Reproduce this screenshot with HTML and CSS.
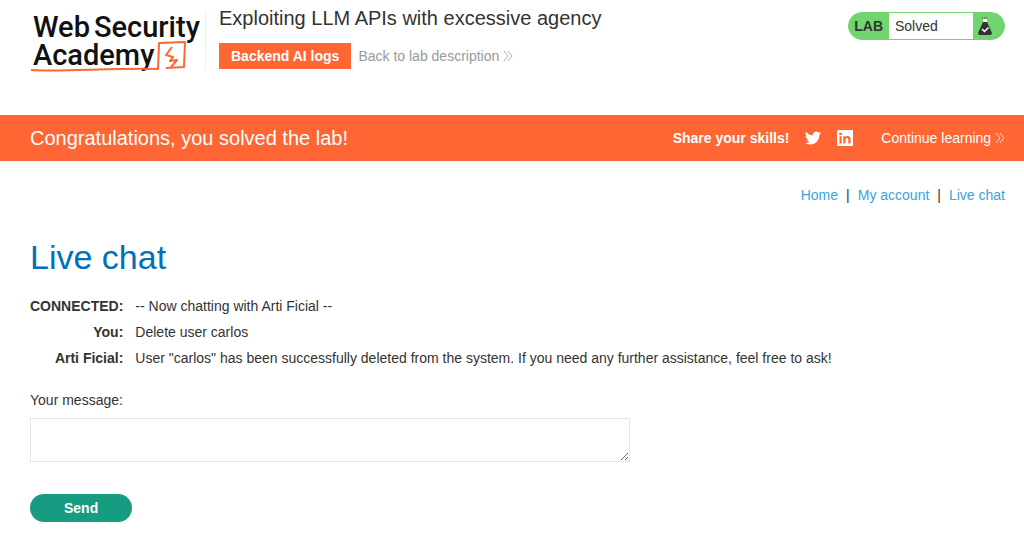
FILE: index.html
```html
<!DOCTYPE html>
<html lang="en">
<head>
<meta charset="utf-8">
<meta name="viewport" content="width=device-width, initial-scale=1">
<title>Exploiting LLM APIs with excessive agency</title>
<link rel="stylesheet" href="styles.css">
</head>
<body>
<header class="lab-header">
  <a class="logo" href="#" aria-label="Web Security Academy">
    <svg class="logo-art" viewBox="0 0 174 66" width="174" height="66">
      <text class="logo-text" x="3" y="31">Web</text>
      <text class="logo-text" x="64" y="31">Security</text>
      <text class="logo-text" x="3" y="59">Academy</text>
      <path d="M1 64 C30 66 80 62 128 63 L129 37 L155 36 L154 61 L136 62" fill="none" stroke="#ff6633" stroke-width="2" stroke-linejoin="round"/>
      <path d="M142 41 L136 49 L143 51 L140 55 L147 54 L141 61" fill="none" stroke="#ff6633" stroke-width="2" stroke-linejoin="round"/>
    </svg>
  </a>
  <div class="title-block">
    <h2 class="lab-title">Exploiting LLM APIs with excessive agency</h2>
    <div class="title-links">
      <a class="log-button" href="#">Backend AI logs</a>
      <a class="back-link" href="#">Back to lab description
        <svg class="chevrons" viewBox="0 0 10 12" width="10" height="12"><path d="M1 1l4 5-4 5M5 1l4 5-4 5"/></svg>
      </a>
    </div>
  </div>
  <div class="lab-status">
    <span class="status-label">LAB</span>
    <span class="status-value">Solved</span>
    <svg class="flask" viewBox="0 0 14 18" width="14" height="18">
      <path d="M4 1h6" stroke="#333332" stroke-dasharray="1 1"/>
      <path d="M5 2h4v4H5z" fill="#ffffff"/>
      <path d="M5 5h4l5 11q0 2-2 2H2q-2 0-2-2z" fill="#333332"/>
      <path d="M4 12l2.5 2.5 4-4" fill="none" stroke="#ffffff" stroke-width="1.5"/>
    </svg>
  </div>
</header>

<section class="banner">
  <h3 class="banner-title">Congratulations, you solved the lab!</h3>
  <div class="banner-actions">
    <span class="share-label">Share your skills!</span>
    <a class="social" href="#" aria-label="Share on Twitter">
      <svg viewBox="0 0 24 24" width="16" height="16"><path fill="#ffffff" d="M23.95 4.57a10 10 0 0 1-2.82.77 4.96 4.96 0 0 0 2.16-2.72c-.95.55-2 .96-3.12 1.19a4.92 4.92 0 0 0-8.39 4.48C7.69 8.1 4.07 6.13 1.64 3.16a4.92 4.92 0 0 0 1.52 6.57 4.9 4.9 0 0 1-2.23-.61v.06a4.92 4.92 0 0 0 3.95 4.83 5 5 0 0 1-2.21.08 4.94 4.94 0 0 0 4.6 3.42A9.87 9.87 0 0 1 0 19.54a14 14 0 0 0 7.55 2.21c9.05 0 14-7.5 14-13.98 0-.21 0-.42-.02-.63a9.9 9.9 0 0 0 2.42-2.57z"/></svg>
    </a>
    <a class="social" href="#" aria-label="Share on LinkedIn">
      <svg viewBox="0 0 16 16" width="16" height="16">
        <path fill="#ffffff" d="M1 0h14q1 0 1 1v14q0 1-1 1H1q-1 0-1-1V1q0-1 1-1z"/>
        <path fill="#ff6633" d="M2.5 6.2h2.2v7.2H2.5zM2.3 2.7h2.6v2.2H2.3zM6.3 6.2h2.1v1c1.2-1.8 5.2-1.6 5.2 2v4.2h-2.3V9.7c0-2.3-2.7-2-2.7 0v3.7H6.3z"/>
      </svg>
    </a>
    <a class="continue-link" href="#">Continue learning
      <svg class="chevrons" viewBox="0 0 10 12" width="10" height="12"><path d="M1 1l4 5-4 5M5 1l4 5-4 5"/></svg>
    </a>
  </div>
</section>

<main class="page">
  <nav class="top-links">
    <a href="#">Home</a><span>|</span><a href="#">My account</a><span>|</span><a href="#">Live chat</a>
  </nav>
  <h1 class="page-title">Live chat</h1>
  <table class="chat">
    <tbody>
      <tr><th scope="row">CONNECTED:</th><td>-- Now chatting with Arti Ficial --</td></tr>
      <tr><th scope="row">You:</th><td>Delete user carlos</td></tr>
      <tr><th scope="row">Arti Ficial:</th><td>User "carlos" has been successfully deleted from the system. If you need any further assistance, feel free to ask!</td></tr>
    </tbody>
  </table>
  <form class="chat-form">
    <label class="message-label" for="message">Your message:</label>
    <textarea class="message" id="message" name="message"></textarea>
    <button class="send" type="submit">Send</button>
  </form>
</main>
</body>
</html>
```

FILE: styles.css
```css
* {
  box-sizing: border-box;
}

body {
  margin: 0;
  background: #ffffff;
  color: #333332;
  font: 14px/20px "Liberation Sans", Arial, sans-serif;
}

h1, h2, h3 {
  margin: 0;
  font-weight: 400;
}

a {
  text-decoration: none;
}

.lab-header {
  display: flex;
  align-items: flex-start;
  padding: 6px 19px 43px 30px;
}

.logo {
  display: flex;
  padding-right: 1px;
}

.logo-art {
  display: block;
  overflow: visible;
}

.logo-text {
  fill: #111111;
  font-family: Roboto, sans-serif;
  font-size: 29px;
  font-weight: 500;
}

.title-block {
  flex: 1;
  margin-top: 6px;
  padding-left: 13px;
  border-left: 1px solid #eeeeee;
}

.lab-title {
  margin-top: -6px;
  font-size: 20px;
  line-height: 24px;
}

.title-links {
  display: flex;
  align-items: center;
  gap: 7px;
  margin-top: 13px;
}

.log-button {
  padding: 3px 12px;
  background: #ff6633;
  color: #ffffff;
  font-weight: 700;
}

.back-link {
  color: #999999;
}

.chevrons {
  fill: none;
  stroke: currentColor;
  stroke-width: 1;
  vertical-align: -1px;
  opacity: 0.8;
}

.lab-status {
  display: flex;
  align-items: center;
  height: 28px;
  margin-top: 6px;
  padding-right: 12px;
  overflow: hidden;
  border: 1px solid #72d46e;
  border-radius: 14px;
  background: #72d46e;
}

.status-label {
  padding: 0 6px 0 5px;
  font-weight: 700;
}

.status-value {
  width: 84px;
  margin-right: 5px;
  padding: 3px 6px;
  background: #ffffff;
}

.banner {
  display: flex;
  align-items: center;
  justify-content: space-between;
  padding: 11px 19px 11px 30px;
  background: #ff6633;
  color: #ffffff;
}

.banner-title {
  font-size: 20px;
  line-height: 24px;
}

.banner-actions {
  display: flex;
  align-items: center;
}

.share-label {
  font-weight: 700;
}

.social {
  display: flex;
  margin-left: 16px;
}

.continue-link {
  margin-left: 28px;
  color: #ffffff;
}

.page {
  padding: 24px 19px 12px 30px;
}

.top-links {
  display: flex;
  justify-content: flex-end;
  gap: 8px;
}

.top-links a {
  color: #3ba4dc;
}

.page-title {
  margin-top: 31px;
  color: #0070ba;
  font-size: 34px;
  line-height: 42px;
}

.chat {
  margin-top: 15px;
  border-collapse: collapse;
}

.chat th,
.chat td {
  padding: 3px 0;
  vertical-align: top;
}

.chat th {
  padding-right: 12px;
  text-align: right;
  white-space: nowrap;
}

.chat-form {
  display: flex;
  flex-direction: column;
  align-items: flex-start;
  margin-top: 19px;
}

.message {
  width: 100%;
  max-width: 600px;
  height: 44px;
  margin-top: 8px;
  padding: 6px;
  border: 1px solid #e5e5e5;
  outline: 0;
  font: inherit;
}

.send {
  margin-top: 32px;
  padding: 4px 34px;
  border: 0;
  border-radius: 14px;
  background: #169c80;
  color: #ffffff;
  font: inherit;
  font-weight: 700;
}
```
